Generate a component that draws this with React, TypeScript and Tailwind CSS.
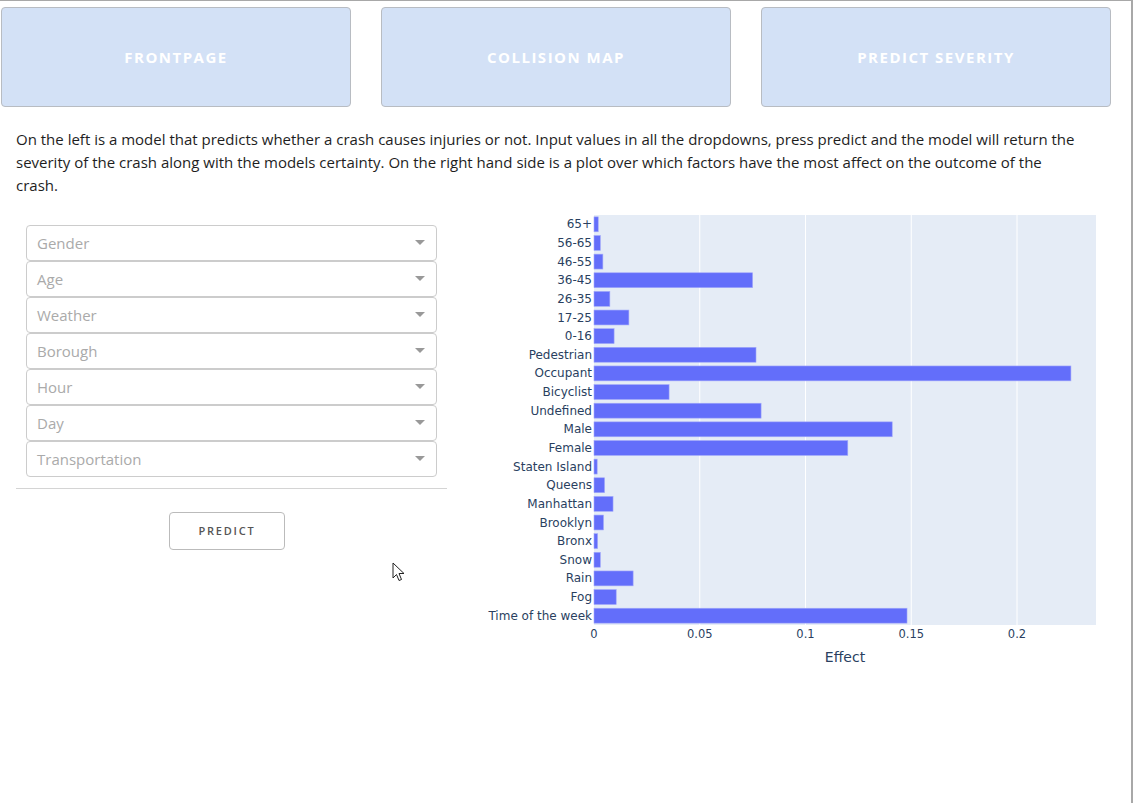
import React from "react";

const NAV = ["FRONTPAGE", "COLLISION MAP", "PREDICT SEVERITY"];

const DROPDOWNS = ["Gender", "Age", "Weather", "Borough", "Hour", "Day", "Transportation"];

const FEATURES: [string, number][] = [
  ["65+", 0.002],
  ["56-65", 0.003],
  ["46-55", 0.0042],
  ["36-45", 0.075],
  ["26-35", 0.0075],
  ["17-25", 0.0165],
  ["0-16", 0.0095],
  ["Pedestrian", 0.0766],
  ["Occupant", 0.2255],
  ["Bicyclist", 0.0355],
  ["Undefined", 0.079],
  ["Male", 0.141],
  ["Female", 0.12],
  ["Staten Island", 0.0015],
  ["Queens", 0.005],
  ["Manhattan", 0.009],
  ["Brooklyn", 0.0045],
  ["Bronx", 0.0017],
  ["Snow", 0.003],
  ["Rain", 0.0185],
  ["Fog", 0.0105],
  ["Time of the week", 0.148],
];

// plot geometry (svg coords)
const PX0 = 114;
const PX1 = 616;
const PY0 = 8;
const PY1 = 418;
const SCALE = 2115; // px per unit of effect

function EffectChart() {
  const step = (PY1 - PY0) / FEATURES.length;
  const ticks = [0, 0.05, 0.1, 0.15, 0.2];
  const font = '"DejaVu Sans", Verdana, sans-serif';
  return (
    <svg width={630} height={470} className="ml-[33px] block shrink-0">
      <rect x={PX0} y={PY0} width={PX1 - PX0} height={PY1 - PY0} fill="#e5ecf6" />
      {ticks.slice(1).map((t) => (
        <line
          key={t}
          x1={PX0 + t * SCALE}
          x2={PX0 + t * SCALE}
          y1={PY0}
          y2={PY1}
          stroke="#ffffff"
          strokeWidth={1}
        />
      ))}
      {FEATURES.map(([name, v], i) => {
        const cy = PY0 + step * (i + 0.5);
        const h = step * 0.8;
        return (
          <g key={name}>
            <rect
              x={PX0}
              y={cy - h / 2}
              width={Math.max(v * SCALE, 1)}
              height={h}
              fill="#636efa"
              stroke="#a3a9fb"
              strokeWidth={0.6}
            />
            <text
              x={PX0 - 2}
              y={cy + 4}
              textAnchor="end"
              fontSize={12}
              fill="#2a3f5f"
              fontFamily={font}
            >
              {name}
            </text>
          </g>
        );
      })}
      {ticks.map((t) => (
        <text
          key={t}
          x={PX0 + t * SCALE}
          y={PY1 + 13}
          textAnchor="middle"
          fontSize={11.5}
          fill="#2a3f5f"
          fontFamily={font}
        >
          {t}
        </text>
      ))}
      <text
        x={365}
        y={455}
        textAnchor="middle"
        fontSize={14}
        fill="#2a3f5f"
        fontFamily={font}
      >
        Effect
      </text>
    </svg>
  );
}

function Dropdown({ label }: { label: string }) {
  return (
    <div className="flex h-[36px] items-center justify-between rounded-[4px] border border-[#cccccc] bg-white pl-[10px] pr-[10px]">
      <span className="text-[15px] text-[#aaaaaa]">{label}</span>
      <svg width={10} height={6} viewBox="0 0 10 6" className="mr-[1px]">
        <path d="M0 0 L10 0 L5 5 Z" fill="#999999" />
      </svg>
    </div>
  );
}

export default function App() {
  return (
    <div
      className="relative h-[803px] w-[1133px] border-t border-r-2 border-[#a8a8a8] bg-white"
      style={{ fontFamily: '"Open Sans", "Noto Sans", sans-serif' }}
    >
      {/* Nav buttons */}
      <div className="flex gap-[30px] pl-[1px] pt-[6px]">
        {NAV.map((n) => (
          <div
            key={n}
            className="flex h-[100px] w-[350px] items-center justify-center rounded-[4px] border border-[#b8bcc2] bg-[#d3e1f6] text-[15px] font-bold tracking-[0.1em] text-white"
          >
            {n}
          </div>
        ))}
      </div>

      {/* Intro */}
      <p className="mt-[21px] ml-[16px] w-[1064px] text-[15px] leading-[23px] text-[#1e1e1e]">
        On the left is a model that predicts whether a crash causes injuries or not. Input values in all the dropdowns,
        press predict and the model will return the severity of the crash along with the models certainty. On the right
        hand side is a plot over which factors have the most affect on the outcome of the crash.
      </p>

      {/* Model + chart */}
      <div className="mt-[10px] flex pl-[16px]">
        <div className="w-[431px] shrink-0">
          <div className="mt-[18px] flex flex-col px-[10px]">
            {DROPDOWNS.map((d) => (
              <Dropdown key={d} label={d} />
            ))}
          </div>
          <div className="mt-[11px] h-px bg-[#d4d4d4]" />
          <button className="ml-[153px] mt-[23px] flex h-[38px] w-[116px] items-center justify-center rounded-[4px] border border-[#bbbbbb] bg-white text-[11px] font-semibold tracking-[0.16em] text-[#555555]">
            PREDICT
          </button>
        </div>
        <EffectChart />
      </div>

      {/* mouse cursor */}
      <svg width={14} height={20} viewBox="0 0 14 20" className="absolute left-[392px] top-[561px]">
        <path d="M1 1 L1 16 L4.5 12.5 L7 18.5 L9.5 17.5 L7 11.5 L12 11.5 Z" fill="#ffffff" stroke="#222222" strokeWidth={1} />
      </svg>
    </div>
  );
}
